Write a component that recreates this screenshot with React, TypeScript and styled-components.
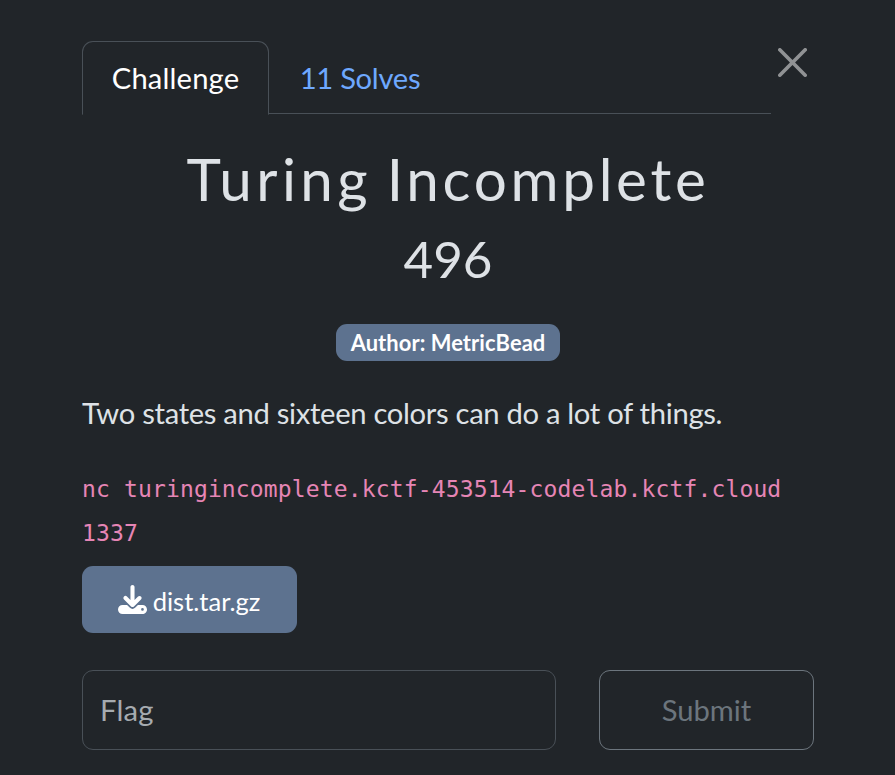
import React from "react";
import styled, { createGlobalStyle } from "styled-components";

const Global = createGlobalStyle`
  *, *::before, *::after { box-sizing: border-box; }
  body { margin: 0; background: #212529; color: #dee2e6; font-family: Lato, sans-serif; font-size: 29.2px; line-height: 44px; }
`;
const Modal = styled.main`
  width: 895px; height: 775px; padding: 41px 81px 0 82px; overflow: hidden; background: #212529;
`;
const Header = styled.div`
  display: flex; align-items: flex-start; height: 73px;
`;
const Tabs = styled.nav`
  display: flex; width: 689px; height: 73px; border-bottom: 1px solid #495057;
`;
const Tab = styled.button<{ $active?: boolean }>`
  height: 74px; width: ${p => (p.$active ? 187 : 182)}px; padding: 0;
  font: inherit; letter-spacing: ${p => (p.$active ? 0.15 : -0.3)}px;
  color: ${p => (p.$active ? "#fff" : "#6ea8fe")};
  background: ${p => (p.$active ? "#212529" : "none")};
  border: 1px solid ${p => (p.$active ? "#495057" : "transparent")};
  border-bottom-color: ${p => (p.$active ? "#212529" : "transparent")};
  border-radius: 11px 11px 0 0;
`;
const Close = styled.button`
  width: 29px; height: 29px; margin: 7px 0 0 7px; padding: 0; border: 0; background: none; color: #909294;
  svg { display: block; }
`;
const Title = styled.h2`
  margin: 29px 0 0; text-align: center; font-size: 58.4px; font-weight: 400; line-height: 70px;
  letter-spacing: 3.7px; word-spacing: -4px;
`;
const FirstWord = styled.span`
  letter-spacing: 4.4px;
`;
const Value = styled.h3`
  margin: 15px 0 0; text-align: center; font-size: 51.1px; font-weight: 400; line-height: 61px;
`;
const Badges = styled.div`
  display: flex; justify-content: center; margin-top: 35px;
`;
const Badge = styled.span`
  width: 224px; height: 37px; border-radius: 11px; background: #5d728f; color: #fff;
  font-size: 21.9px; font-weight: 700; line-height: 37px; text-align: center; letter-spacing: 0.08px;
`;
const Description = styled.p`
  margin: 30px 0 0; white-space: nowrap; letter-spacing: -0.31px;
`;
const Command = styled.code`
  display: block; margin-top: 32px; color: #e685b5; font-family: "DejaVu Sans Mono", monospace;
  font-size: 23px; letter-spacing: 0.14px; line-height: 44px;
`;
const Download = styled.a`
  display: flex; align-items: center; justify-content: center; gap: 6px; width: 215px; height: 67px; margin-top: 11px;
  background: #5d728f; color: #fff; border-radius: 11px; font-size: 25.55px;
  padding-right: 1px;
  span { padding-top: 2px; }
`;
const Form = styled.form`
  display: flex; gap: 43px; margin-top: 37px;
`;
const FlagInput = styled.input`
  width: 474px; height: 80px; padding: 0 17px 2px; font: inherit; letter-spacing: 0.2px; color: #dee2e6; background: #212529;
  border: 1px solid #495057; border-radius: 11px;
  &::placeholder { color: #a6abb0; opacity: 1; }
`;
const Submit = styled.button`
  width: 215px; height: 80px; padding: 0; font: inherit; color: #6c757d; background: none;
  border: 1px solid #6c757d; border-radius: 11px;
`;

export default function App() {
  return (
    <Modal>
      <Global />
      <Header>
        <Tabs><Tab $active>Challenge</Tab><Tab>11 Solves</Tab></Tabs>
        <Close aria-label="Close">
          <svg width="29" height="29" viewBox="0 0 16 16" fill="currentColor">
            <path d="M.293.293a1 1 0 0 1 1.414 0L8 6.586 14.293.293a1 1 0 1 1 1.414 1.414L9.414 8l6.293 6.293a1 1 0 0 1-1.414 1.414L8 9.414l-6.293 6.293a1 1 0 0 1-1.414-1.414L6.586 8 .293 1.707a1 1 0 0 1 0-1.414z" />
          </svg>
        </Close>
      </Header>
      <Title><FirstWord>Turing</FirstWord> Incomplete</Title>
      <Value>496</Value>
      <Badges><Badge>Author: MetricBead</Badge></Badges>
      <Description>Two states and sixteen colors can do a lot of things.</Description>
      <Command>nc turingincomplete.kctf-453514-codelab.kctf.cloud 1337</Command>
      <Download>
        <svg width="29" height="29" viewBox="0 0 512 512" fill="currentColor">
          <path d="M292 36c0-20-16-36-36-36s-36 16-36 36v229l-62-62c-15-15-38-15-52 0s-15 38 0 52l124 124c15 15 38 15 52 0l124-124c15-15 15-38 0-52s-38-15-52 0l-62 62V36zM80 352c-44 0-80 36-80 80s36 80 80 80h352c44 0 80-36 80-80s-36-80-80-80h-80l-51 51c-25 25-65 25-90 0l-51-51H80zm352 56a24 24 0 1 1 0 48 24 24 0 1 1 0-48z" />
        </svg>
        <span>dist.tar.gz</span>
      </Download>
      <Form>
        <FlagInput placeholder="Flag" />
        <Submit type="button">Submit</Submit>
      </Form>
    </Modal>
  );
}
